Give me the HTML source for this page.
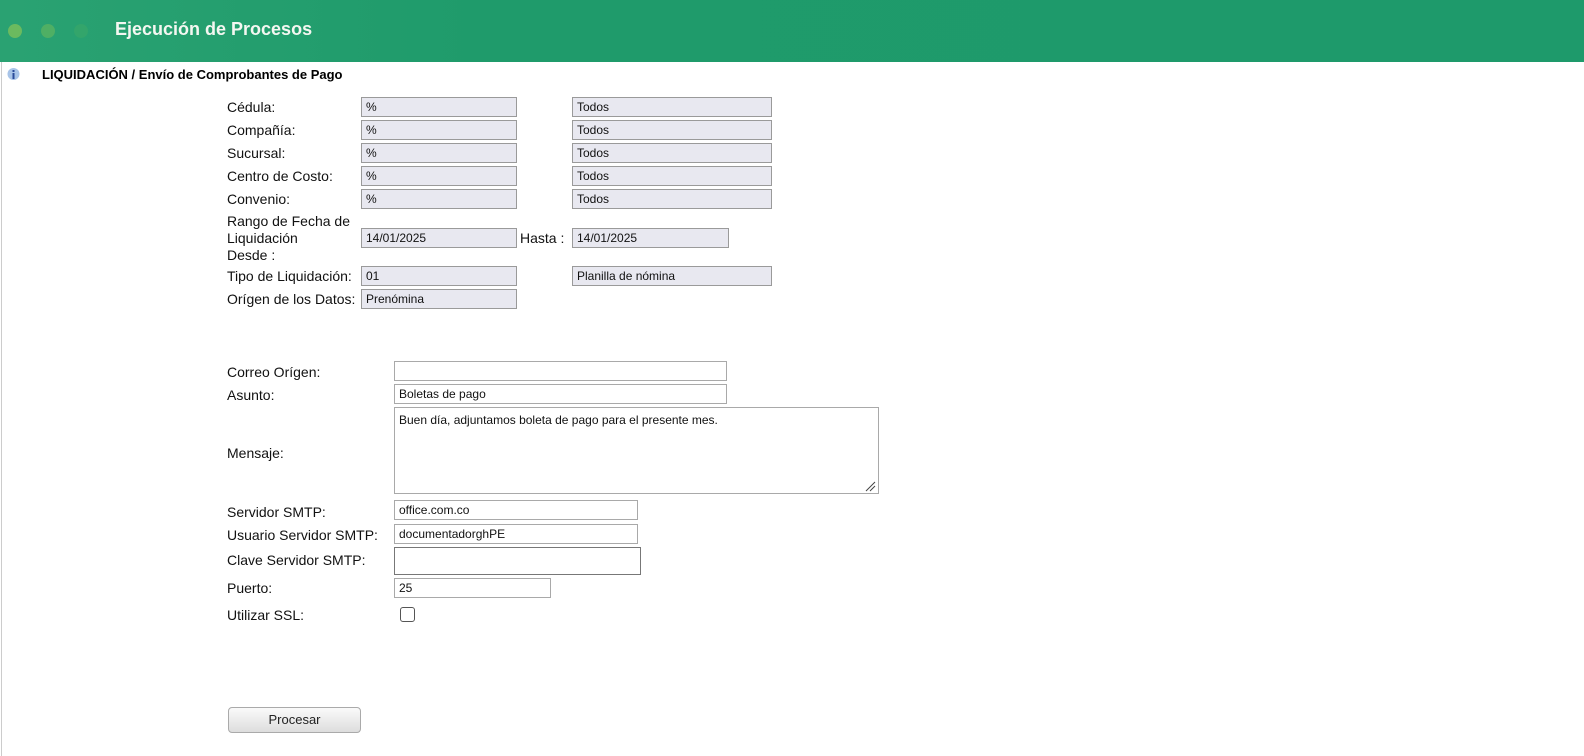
<!DOCTYPE html>
<html><head><meta charset="utf-8"><style>
body{margin:0;width:1584px;height:756px;position:relative;overflow:hidden;background:#fff;font-family:"Liberation Sans","DejaVu Sans",sans-serif;}
.hd{position:absolute;left:0;top:0;width:1584px;height:62px;background:linear-gradient(90deg,#2aa272 0%,#1f9b6b 30%,#1e9a6b 100%);}
.dot{position:absolute;top:24px;width:14px;height:14px;border-radius:50%;}
.ttl{position:absolute;left:115px;top:19px;color:#f4f7f1;font-weight:bold;font-size:18px;}
.bc{position:absolute;left:42px;top:67px;font-weight:bold;font-size:13px;color:#000;}
.l{position:absolute;left:227px;font-size:14px;color:#111;line-height:17px;}
.i{position:absolute;box-sizing:border-box;border:1px solid #9a9a9a;background:#e8e8f0;font-size:12px;padding:3px 4px;height:20px;line-height:13px;color:#111;}
.w{background:#fff;border-color:#a9a9a9;}
</style></head><body>
<div class="hd">
<div class="dot" style="left:8px;background:#7cc05a;opacity:.8"></div>
<div class="dot" style="left:41px;background:#5fb560;opacity:.7"></div>
<div class="dot" style="left:74px;background:#3aa868;opacity:.6"></div>
<div class="ttl">Ejecución de Procesos</div>
</div>
<div style="position:absolute;left:1px;top:62px;width:1px;height:694px;background:#ccc"></div>
<svg style="position:absolute;left:6px;top:67px" width="15" height="14"><circle cx="7.5" cy="7" r="6" fill="#a8c4e8"/><rect x="6.5" y="3" width="2" height="2" fill="#2a4c9a"/><rect x="6.5" y="6" width="2" height="6" fill="#2a4c9a"/></svg>
<div class="bc">LIQUIDACIÓN / Envío de Comprobantes de Pago</div>

<div class="l" style="top:99px">Cédula:</div>
<div class="i" style="left:361px;top:97px;width:156px">%</div><div class="i" style="left:572px;top:97px;width:200px">Todos</div>
<div class="l" style="top:122px">Compañía:</div>
<div class="i" style="left:361px;top:120px;width:156px">%</div><div class="i" style="left:572px;top:120px;width:200px">Todos</div>
<div class="l" style="top:145px">Sucursal:</div>
<div class="i" style="left:361px;top:143px;width:156px">%</div><div class="i" style="left:572px;top:143px;width:200px">Todos</div>
<div class="l" style="top:168px">Centro de Costo:</div>
<div class="i" style="left:361px;top:166px;width:156px">%</div><div class="i" style="left:572px;top:166px;width:200px">Todos</div>
<div class="l" style="top:191px">Convenio:</div>
<div class="i" style="left:361px;top:189px;width:156px">%</div><div class="i" style="left:572px;top:189px;width:200px">Todos</div>
<div class="l" style="top:213px">Rango de Fecha de<br>Liquidación<br>Desde :</div>
<div class="i" style="left:361px;top:228px;width:156px">14/01/2025</div>
<div class="l" style="left:520px;top:230px">Hasta :</div>
<div class="i" style="left:572px;top:228px;width:157px">14/01/2025</div>
<div class="l" style="top:268px">Tipo de Liquidación:</div>
<div class="i" style="left:361px;top:266px;width:156px">01</div><div class="i" style="left:572px;top:266px;width:200px">Planilla de nómina</div>
<div class="l" style="top:291px">Orígen de los Datos:</div>
<div class="i" style="left:361px;top:289px;width:156px">Prenómina</div>

<div class="l" style="top:364px">Correo Orígen:</div>
<div class="i w" style="left:394px;top:361px;width:333px"></div>
<div class="l" style="top:387px">Asunto:</div>
<div class="i w" style="left:394px;top:384px;width:333px">Boletas de pago</div>
<div class="l" style="top:445px">Mensaje:</div>
<div class="i w" style="left:394px;top:407px;width:485px;height:87px;padding-top:6px">Buen día, adjuntamos boleta de pago para el presente mes.</div>
<svg style="position:absolute;left:864px;top:480px" width="12" height="12"><path d="M2 11L11 2M6 11L11 6" stroke="#444" stroke-width="1"/></svg>
<div class="l" style="top:504px">Servidor SMTP:</div>
<div class="i w" style="left:394px;top:500px;width:244px">office.com.co</div>
<div class="l" style="top:527px">Usuario Servidor SMTP:</div>
<div class="i w" style="left:394px;top:524px;width:244px">documentadorghPE</div>
<div class="l" style="top:552px">Clave Servidor SMTP:</div>
<div class="i w" style="left:394px;top:547px;width:247px;height:28px;border-color:#777"></div>
<div class="l" style="top:580px">Puerto:</div>
<div class="i w" style="left:394px;top:578px;width:157px">25</div>
<div class="l" style="top:607px">Utilizar SSL:</div>
<div style="position:absolute;left:400px;top:607px;width:13px;height:13px;border:1px solid #555;border-radius:3px;background:#fff"></div>
<div style="position:absolute;left:228px;top:707px;width:131px;height:24px;border:1px solid #aaa;border-radius:4px;background:linear-gradient(#fafafa,#ddd);font-size:13px;text-align:center;line-height:24px;color:#222">Procesar</div>
</body></html>
